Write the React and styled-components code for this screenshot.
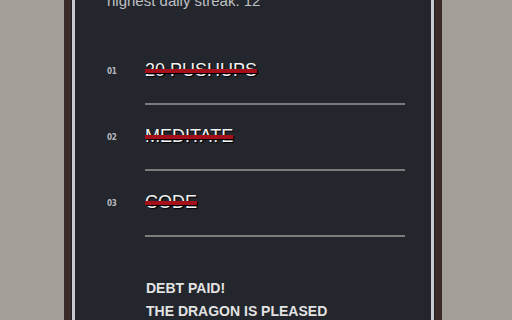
import React from "react";
import styled, { createGlobalStyle } from "styled-components";

const Global = createGlobalStyle`
  html, body { margin: 0; padding: 0; }
  body {
    background: #a39f98;
    width: 512px;
    height: 320px;
    overflow: hidden;
    font-family: "Liberation Sans", Arial, sans-serif;
  }
`;

const Frame = styled.div`
  box-sizing: border-box;
  width: 378px;
  margin: -29px 0 0 64px;
  border: 7px solid #3a2b28;
  border-bottom: none;
  background: #1d1f24;
  padding: 1px 1px 0 1px;
`;

const Panel = styled.div`
  border: 3px solid #c8cad0;
  border-bottom: none;
  background: #23262d;
  padding: 10px 26px 40px 32px;
  min-height: 360px;
`;

const Streak = styled.div`
  font-size: 15px;
  line-height: 18px;
  color: #bfc0c2;
  margin-bottom: 29px;
`;

const List = styled.div`
  display: flex;
  flex-direction: column;
`;

const Row = styled.div`
  display: grid;
  grid-template-columns: 38px 1fr;
  align-items: center;
`;

const Num = styled.span`
  font-family: "DejaVu Sans Condensed", "DejaVu Sans", sans-serif;
  font-weight: bold;
  font-size: 8px;
  color: #b9babd;
  letter-spacing: -0.2px;
  padding-bottom: 1px;
`;

const Task = styled.div`
  padding: 21px 0 22px;
  border-bottom: 2px solid #7c7c7c;
  align-self: stretch;
`;

const TaskText = styled.span`
  font-size: 18px;
  line-height: 21px;
  color: #f2f2f2;
  text-transform: uppercase;
  text-shadow: 1px 1px 1px #000;
  text-decoration: ${(p) => (p.$done ? "line-through" : "none")};
  text-decoration-color: #a40f1a;
  text-decoration-thickness: 4px;
`;

const Message = styled.div`
  margin: 40px 0 0 39px;
  font-weight: bold;
  font-size: 14px;
  line-height: 23px;
  color: #e2e2e2;
`;

const tasks = [
  { n: "01", label: "20 Pushups", done: true },
  { n: "02", label: "Meditate", done: true },
  { n: "03", label: "Code", done: true },
];

export default function App() {
  return (
    <>
      <Global />
      <Frame>
        <Panel>
          <Streak>highest daily streak: 12</Streak>
          <List>
            {tasks.map((t) => (
              <Row key={t.n}>
                <Num>{t.n}</Num>
                <Task>
                  <TaskText $done={t.done}>{t.label}</TaskText>
                </Task>
              </Row>
            ))}
          </List>
          <Message>
            <div>DEBT PAID!</div>
            <div>THE DRAGON IS PLEASED</div>
          </Message>
        </Panel>
      </Frame>
    </>
  );
}
